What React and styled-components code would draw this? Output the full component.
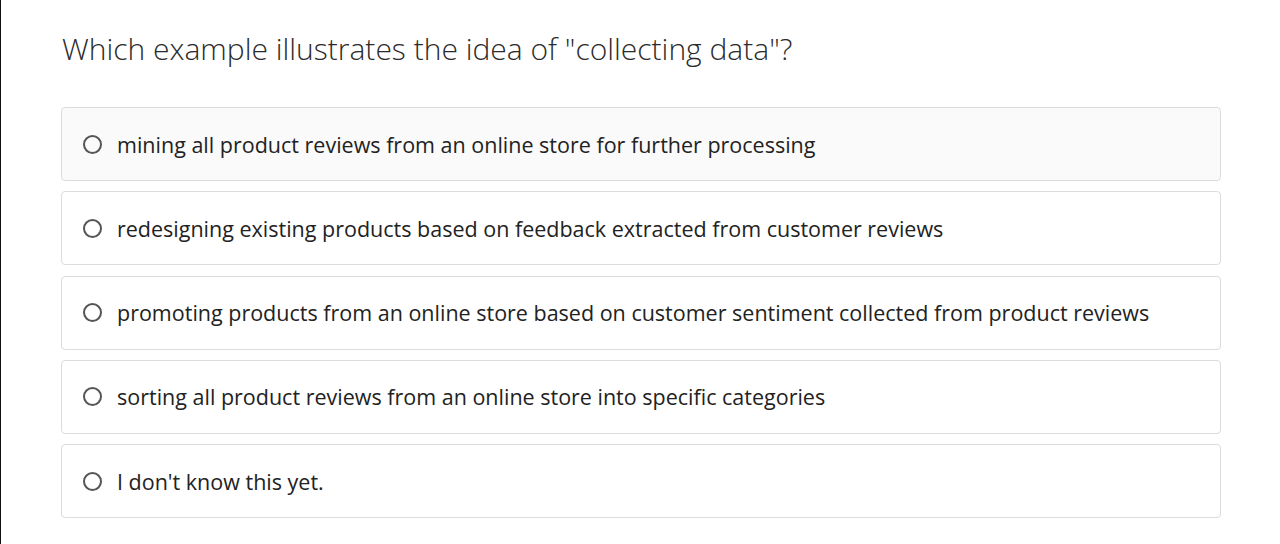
import React, { useState } from "react";
import styled, { createGlobalStyle } from "styled-components";

const GlobalStyle = createGlobalStyle`
  html, body {
    margin: 0;
    padding: 0;
    background: #fff;
  }
  body {
    font-family: "Open Sans", "Liberation Sans", sans-serif;
  }
`;

const Page = styled.div`
  min-height: 544px;
  box-sizing: border-box;
  border-left: 1px solid #111;
  padding: 28px 59px 0 60px;
`;

const Question = styled.h1`
  margin: 0 0 37px 1px;
  font-size: 30px;
  font-weight: 300;
  line-height: 42px;
  color: #2b2b2b;
`;

const Options = styled.div`
  display: flex;
  flex-direction: column;
  gap: 10.25px;
`;

const Option = styled.label`
  display: flex;
  align-items: center;
  gap: 15px;
  height: 74px;
  box-sizing: border-box;
  padding: 0 20px;
  border: 1px solid #dcdcdc;
  border-radius: 4px;
  background: ${p => (p.$hover ? "#fafafa" : "#fff")};
  cursor: pointer;
`;

const Radio = styled.span`
  width: 19px;
  height: 19px;
  box-sizing: border-box;
  border-radius: 50%;
  border: 2px solid #555;
  flex-shrink: 0;
  margin-left: 1px;
`;

const Text = styled.span`
  font-size: 21.5px;
  color: #222;
`;

const answers = [
  "mining all product reviews from an online store for further processing",
  "redesigning existing products based on feedback extracted from customer reviews",
  "promoting products from an online store based on customer sentiment collected from product reviews",
  "sorting all product reviews from an online store into specific categories",
  "I don't know this yet."
];

const App = () => {
  const [hovered, setHovered] = useState(0);

  return (
    <Page>
      <GlobalStyle />
      <Question>Which example illustrates the idea of "collecting data"?</Question>
      <Options>
        {answers.map((a, i) => (
          <Option key={i} $hover={hovered === i} onMouseEnter={() => setHovered(i)}>
            <Radio />
            <Text>{a}</Text>
          </Option>
        ))}
      </Options>
    </Page>
  );
};

export default App;
